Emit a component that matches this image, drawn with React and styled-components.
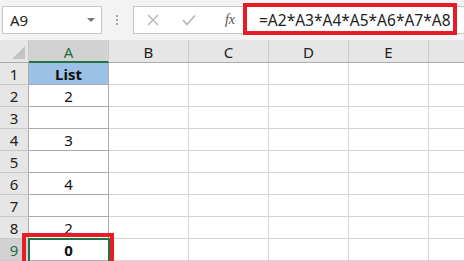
import React from 'react';
import styled, { createGlobalStyle } from 'styled-components';

const Global = createGlobalStyle`
  html, body { margin: 0; padding: 0; background: #fff; overflow: hidden; }
  body { font-family: "Noto Sans", "Liberation Sans", sans-serif; }
`;

const Page = styled.div`
  position: relative;
  width: 464px;
  height: 261px;
  overflow: hidden;
  background: #fff;
`;

const Toolbar = styled.div`
  display: flex;
  align-items: center;
  height: 40px;
  padding: 0 0 0 2px;
  background: #f3f3f3;
  box-sizing: border-box;
`;

const NameBox = styled.div`
  display: flex;
  align-items: center;
  justify-content: space-between;
  width: 100px;
  height: 28px;
  box-sizing: border-box;
  border: 1px solid #c6c6c6;
  background: #fff;
  padding: 0 6px 0 7px;
  font-size: 15px;
  color: #222;
`;

const Caret = styled.span`
  width: 0;
  height: 0;
  border-left: 4px solid transparent;
  border-right: 4px solid transparent;
  border-top: 4px solid #777;
`;

const Dots = styled.div`
  display: flex;
  flex-direction: column;
  gap: 2px;
  margin: 0 15px 0 14px;
  span { width: 2px; height: 2px; background: #a8a8a8; }
`;

const FormulaBox = styled.div`
  display: flex;
  align-items: center;
  flex: 1;
  height: 28px;
  box-sizing: border-box;
  border: 1px solid #c6c6c6;
  border-right: none;
  background: #fff;
`;

const IconSlot = styled.div`
  display: flex;
  align-items: center;
  justify-content: center;
  width: ${p => p.w}px;
  height: 100%;
`;

const Fx = styled.span`
  font-family: "Liberation Serif", serif;
  font-style: italic;
  font-size: 14px;
  color: #555;
`;

const FormulaText = styled.div`
  padding-left: 5px;
  font-size: 15.5px;
  color: #222;
  white-space: nowrap;
`;

const Sheet = styled.div`
  display: grid;
  grid-template-columns: 29px repeat(6, 80px);
  grid-template-rows: 23px repeat(9, 22px);
`;

const Corner = styled.div`
  position: relative;
  background: #e6e6e6;
  border-right: 1px solid #c8c8c8;
  border-bottom: 1px solid #ababab;
  box-sizing: border-box;
  &::after {
    content: '';
    position: absolute;
    right: 3px;
    bottom: 3px;
    border-left: 13px solid transparent;
    border-bottom: 13px solid #c3c3c3;
  }
`;

const ColHead = styled.div`
  display: flex;
  align-items: center;
  justify-content: center;
  box-sizing: border-box;
  background: ${p => (p.active ? '#d2d2d2' : '#e6e6e6')};
  border-right: 1px solid #c8c8c8;
  border-bottom: ${p => (p.active ? '2px solid #217346' : '1px solid #ababab')};
  color: ${p => (p.active ? '#1e6b41' : '#222')};
  font-size: 15px;
  padding-top: 2px;
`;

const RowHead = styled.div`
  display: flex;
  align-items: center;
  justify-content: center;
  box-sizing: border-box;
  background: ${p => (p.active ? '#d2d2d2' : '#e6e6e6')};
  border-right: 1px solid #ababab;
  border-bottom: 1px solid #c8c8c8;
  color: ${p => (p.active ? '#1e6b41' : '#222')};
  font-size: 15px;
`;

const Cell = styled.div`
  display: flex;
  align-items: center;
  justify-content: center;
  box-sizing: border-box;
  background: ${p => (p.fill ? '#9bc2e6' : '#fff')};
  border-right: 1px solid ${p => (p.strong ? '#ababab' : '#d4d4d4')};
  border-bottom: 1px solid ${p => (p.strong ? '#ababab' : '#d4d4d4')};
  font-size: 15px;
  font-weight: ${p => (p.bold ? 700 : 400)};
  color: #111;
`;

const Highlight = styled.div`
  position: absolute;
  left: ${p => p.x}px;
  top: ${p => p.y}px;
  width: ${p => p.w}px;
  height: ${p => p.h}px;
  box-sizing: border-box;
  border: 4px solid #e81c24;
  pointer-events: none;
`;

const Selection = styled.div`
  position: absolute;
  left: 28px;
  top: 238px;
  width: 82px;
  height: 30px;
  box-sizing: border-box;
  border: 2px solid #217346;
`;

// column F is only a sliver at the right edge, its letter falls off-screen
const cols = ['A', 'B', 'C', 'D', 'E', 'F'];
const labels = { F: '' };
const values = { 1: 'List', 2: '2', 4: '3', 6: '4', 8: '2', 9: '0' };

export default function App() {
  return (
    <Page>
      <Global />
      <Toolbar>
        <NameBox>
          <span>A9</span>
          <Caret />
        </NameBox>
        <Dots><span /><span /><span /></Dots>
        <FormulaBox>
          <IconSlot w={38}>
            <svg width="12" height="12" viewBox="0 0 12 12">
              <path d="M1 1 L11 11 M11 1 L1 11" stroke="#b4b4b4" strokeWidth="1.4" fill="none" />
            </svg>
          </IconSlot>
          <IconSlot w={34}>
            <svg width="14" height="12" viewBox="0 0 14 12">
              <path d="M1 6 L5 10.5 L13 1.5" stroke="#b4b4b4" strokeWidth="1.6" fill="none" />
            </svg>
          </IconSlot>
          <IconSlot w={48}>
            <Fx>fx</Fx>
          </IconSlot>
          <FormulaText>=A2*A3*A4*A5*A6*A7*A8</FormulaText>
        </FormulaBox>
      </Toolbar>
      <Sheet>
        <Corner />
        {cols.map(c => (
          <ColHead key={c} active={c === 'A'}>{c in labels ? labels[c] : c}</ColHead>
        ))}
        {Array.from({ length: 9 }, (_, i) => i + 1).map(r => (
          <React.Fragment key={r}>
            <RowHead active={r === 9}>{r}</RowHead>
            {cols.map(c => (
              <Cell
                key={c}
                fill={c === 'A' && r === 1}
                bold={c === 'A' && (r === 1 || r === 9)}
                strong={c === 'A'}
              >
                {c === 'A' ? values[r] : ''}
              </Cell>
            ))}
          </React.Fragment>
        ))}
      </Sheet>
      <Selection />
      <Highlight x={243} y={3} w={214} h={32} />
      <Highlight x={22} y={233} w={92} h={40} />
    </Page>
  );
}
